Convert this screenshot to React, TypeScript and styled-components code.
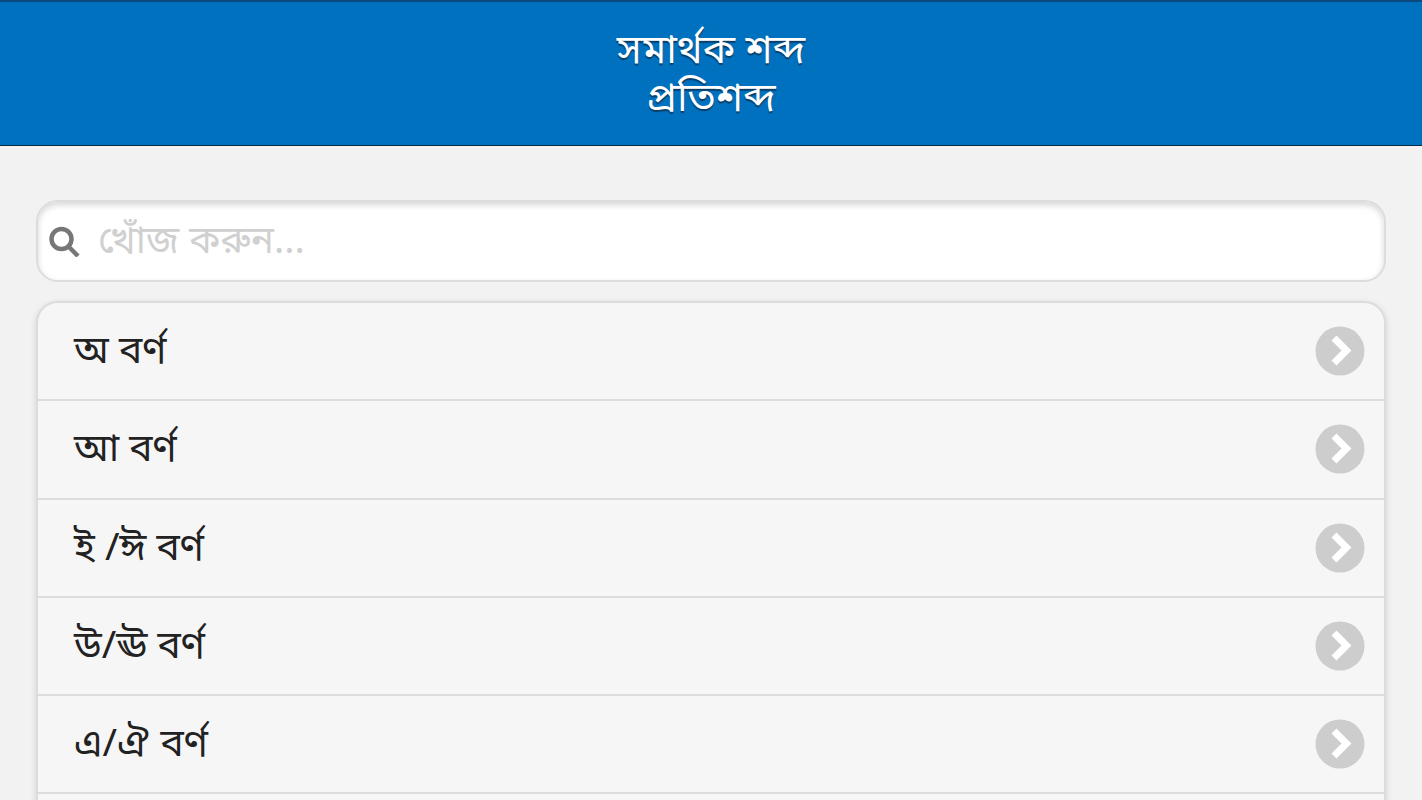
import styled, { createGlobalStyle } from "styled-components";

const items = ["অ বর্ণ", "আ বর্ণ", "ই /ঈ বর্ণ", "উ/ঊ বর্ণ", "এ/ঐ বর্ণ", "ও/ঔ বর্ণ"];

const Global = createGlobalStyle`
  html, body {
    margin: 0;
    height: 100%;
    overflow: hidden;
    background: #f2f2f2;
  }
  body {
    font-family: "Noto Sans Bengali", "Noto Sans", "Liberation Sans", sans-serif;
  }
`;

const Page = styled.div`
  height: 800px;
  overflow: hidden;
  background: #f2f2f2;
`;

const Header = styled.header`
  box-sizing: border-box;
  height: 146px;
  padding-top: 27px;
  background: #0071bf;
  border-top: 2px solid #0a4a7c;
  border-bottom: 1px solid #0b2a44;
  color: #fff;
  font-size: 40px;
  line-height: 48px;
  text-align: center;
  text-shadow: 0 2px 1px #0a3d66;
`;

const Content = styled.main`
  display: flex;
  flex-direction: column;
  gap: 19px;
  padding: 54px 36px 0;
`;

const Search = styled.label`
  box-sizing: border-box;
  height: 82px;
  display: flex;
  align-items: center;
  gap: 17px;
  padding: 0 12px 0 11px;
  background: #fff;
  border: 2px solid #dcdcdc;
  border-radius: 22px;
  box-shadow: inset 0 3px 6px rgba(0, 0, 0, 0.16);
`;

const SearchIcon = styled.svg`
  width: 32px;
  height: 32px;
  flex: none;
`;

const SearchInput = styled.input`
  flex: 1;
  min-width: 0;
  box-sizing: border-box;
  height: 64px;
  border: 0;
  outline: 0;
  padding: 4px 0 0;
  background: transparent;
  font: inherit;
  font-size: 38.5px;
  color: #222;

  &::placeholder {
    color: #d0d0d0;
    opacity: 1;
  }
`;

const List = styled.ul`
  list-style: none;
  margin: 0;
  padding: 0;
  background: #f6f6f6;
  border: 2px solid #dcdcdc;
  border-radius: 22px;
  box-shadow: 0 2px 6px rgba(0, 0, 0, 0.14);
`;

const Row = styled.li`
  box-sizing: border-box;
  height: 98.25px;
  display: flex;
  align-items: center;
  justify-content: space-between;
  padding: 0 19px 0 36px;
  border-bottom: 2px solid #dcdcdc;
  color: #222;
  font-size: 39px;
`;

const RowLabel = styled.span`
  margin-top: 4px;
`;

const Chevron = styled.svg`
  width: 50px;
  height: 50px;
  flex: none;
`;

export default function App() {
  return (
    <Page>
      <Global />
      <Header>
        সমার্থক শব্দ
        <br />
        প্রতিশব্দ
      </Header>
      <Content>
        <Search>
          <SearchIcon viewBox="0 0 32 32" aria-hidden="true">
            <circle cx="12.5" cy="14" r="10" fill="none" stroke="#777" strokeWidth="4.5" />
            <path d="M19 21l10 10" stroke="#777" strokeWidth="4.5" fill="none" />
          </SearchIcon>
          <SearchInput placeholder="খোঁজ করুন..." />
        </Search>
        <List>
          {items.map((item) => (
            <Row key={item}>
              <RowLabel>{item}</RowLabel>
              <Chevron viewBox="0 0 50 50" aria-hidden="true">
                <circle cx="25" cy="25" r="24.5" fill="#cdcdcd" />
                <path d="M19 12l12.5 12.5L19 37" fill="none" stroke="#fff" strokeWidth="7" />
              </Chevron>
            </Row>
          ))}
        </List>
      </Content>
    </Page>
  );
}
